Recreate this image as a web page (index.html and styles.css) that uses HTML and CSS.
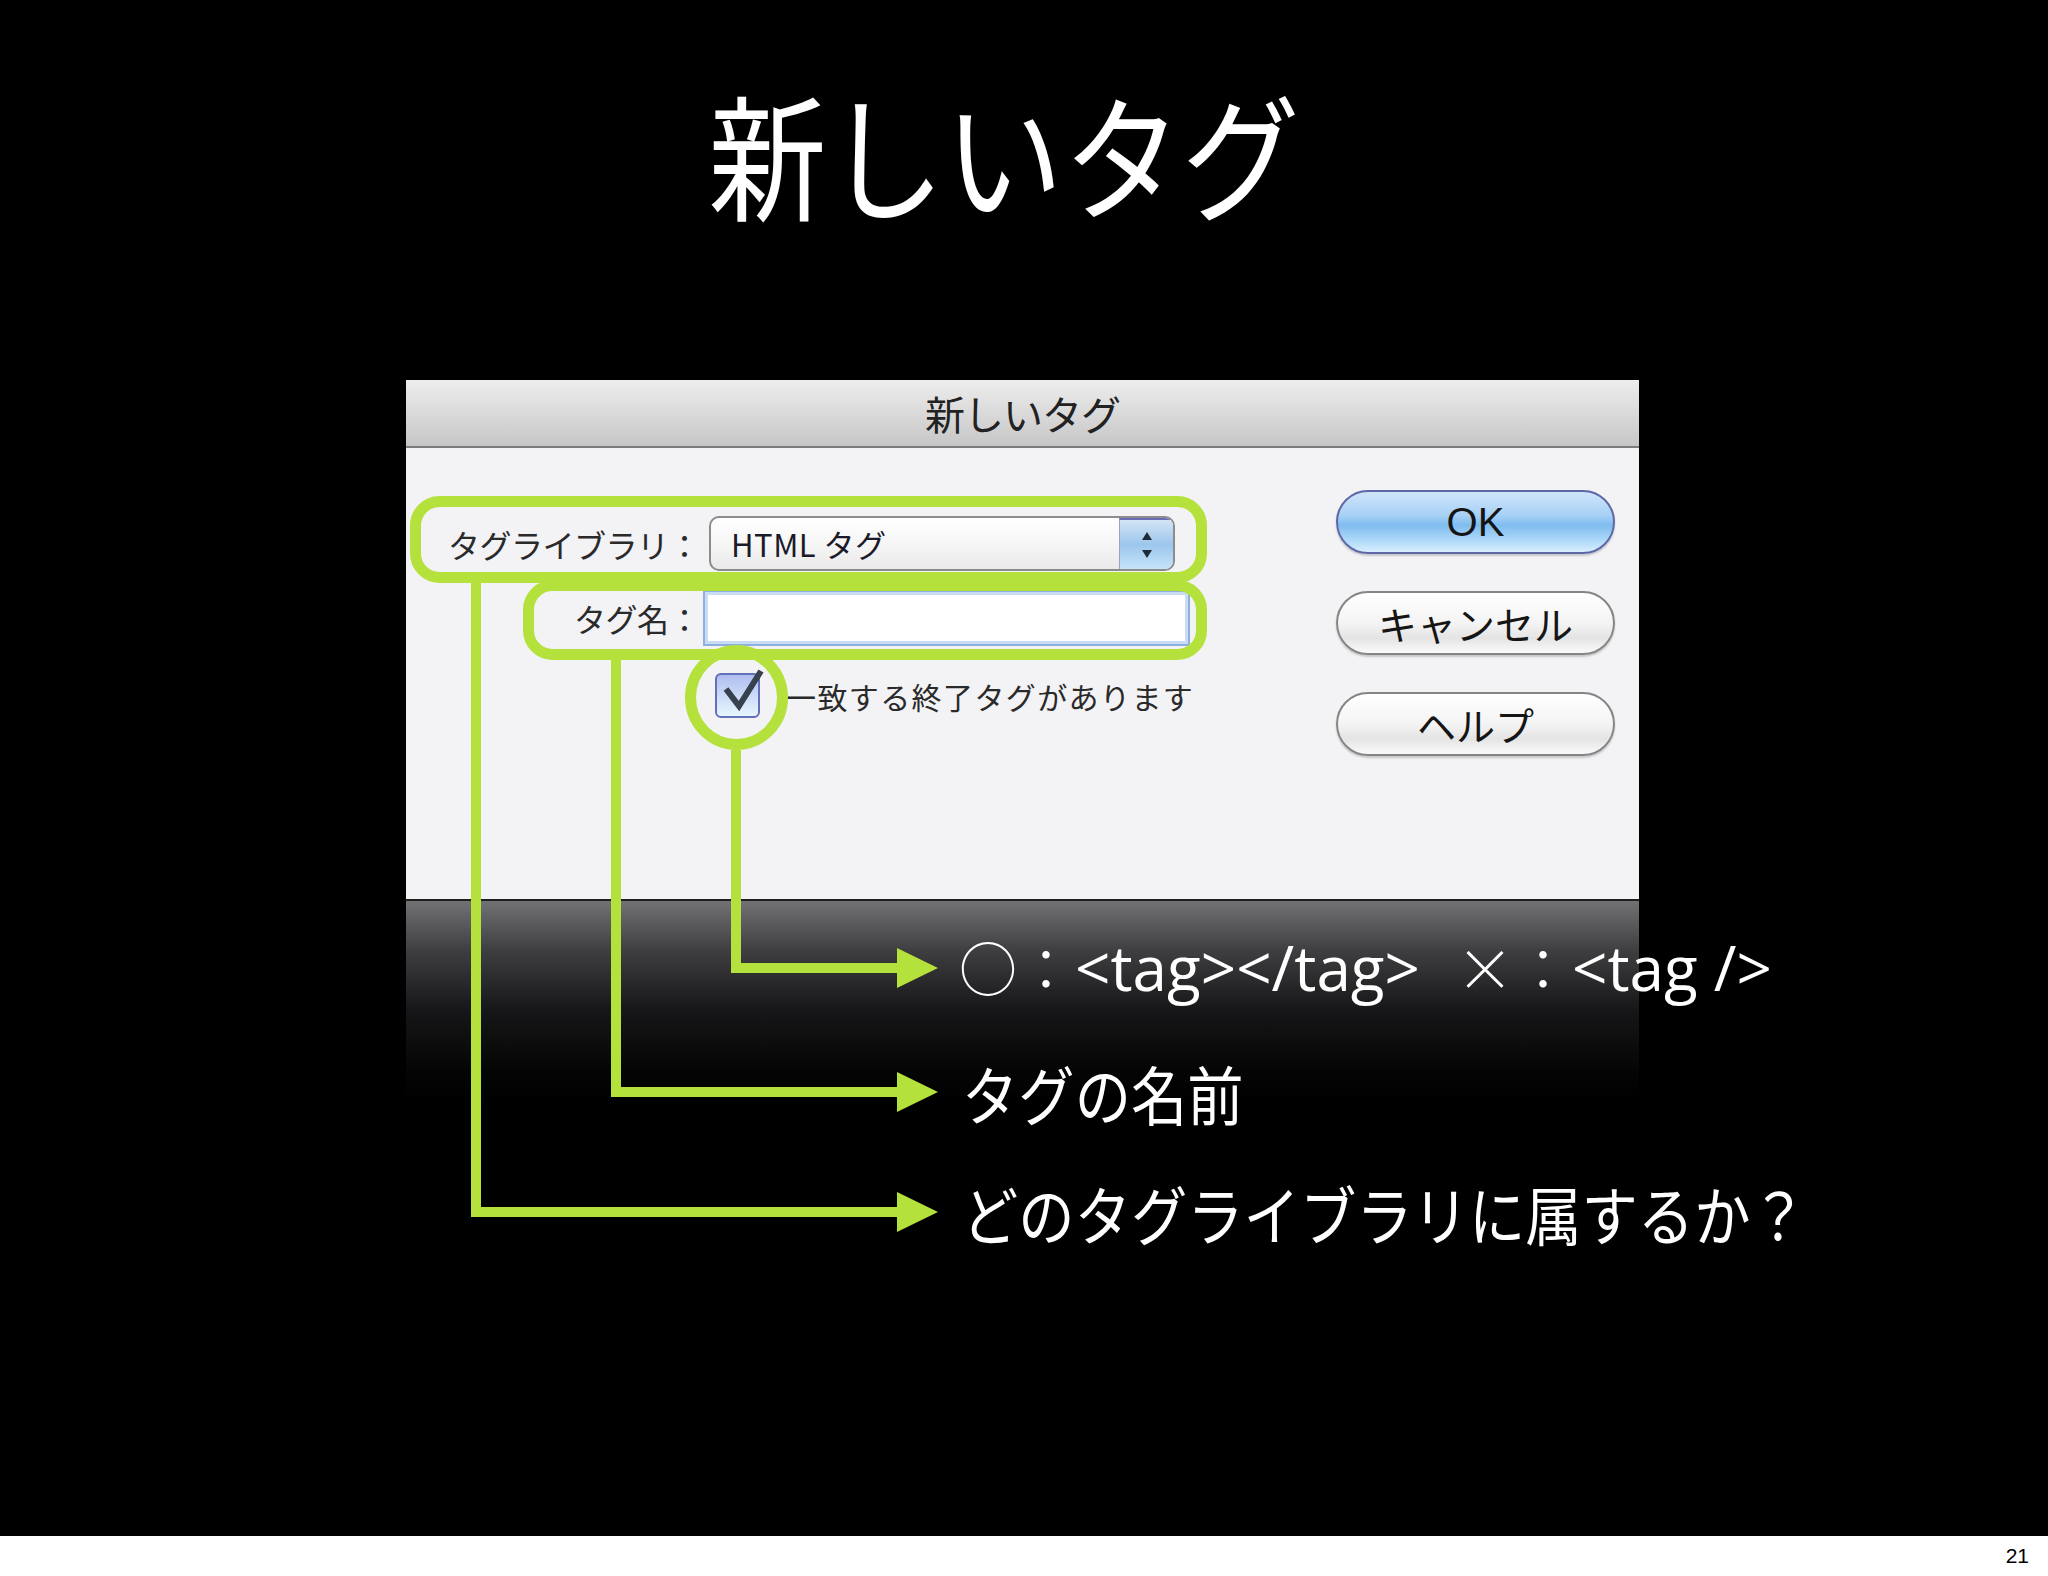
FILE: index.html
```html
<!DOCTYPE html>
<html lang="ja">
<head>
<meta charset="utf-8">
<title>新しいタグ</title>
<link rel="stylesheet" href="styles.css">
</head>
<body>
<div class="slide">
  <h1 class="title"><span class="title-text">新しいタグ</span></h1>

  <div class="stage">
    <div class="dialog">
      <div class="titlebar">新しいタグ</div>
      <div class="dbody">
        <div class="form">
          <div class="row row-lib">
            <span class="lbl">タグライブラリ：</span>
            <div class="select">
              <span class="sel-text">HTML タグ</span>
              <span class="stepper">
                <svg width="20" height="34" viewBox="0 0 20 34"><path d="M10 4 L15 12 H5 Z" fill="#1f2a3a"/><path d="M10 30 L15 22 H5 Z" fill="#1f2a3a"/></svg>
              </span>
            </div>
          </div>
          <div class="row row-name">
            <span class="lbl">タグ名：</span>
            <div class="field"></div>
          </div>
          <div class="row row-check">
            <span class="check">
              <svg class="tick" width="60" height="60" viewBox="0 0 60 60"><path d="M11 21 L24 38 L46 3" fill="none" stroke="#38424f" stroke-width="6" stroke-linejoin="miter"/></svg>
            </span>
            <span class="check-lbl">一致する終了タグがあります</span>
          </div>
        </div>
        <div class="buttons">
          <div class="btn btn-ok">OK</div>
          <div class="btn">キャンセル</div>
          <div class="btn">ヘルプ</div>
        </div>
      </div>
    </div>
    <div class="reflection"></div>
  </div>

  <svg class="annot" width="2048" height="1536" viewBox="0 0 2048 1536">
    <g fill="none" stroke="#b4e13b" stroke-width="11">
      <rect x="415.5" y="501.5" width="786" height="76" rx="24"/>
      <rect x="528.5" y="585.5" width="673" height="69" rx="24"/>
      <ellipse cx="736.5" cy="697.5" rx="46" ry="47"/>
    </g>
    <g fill="none" stroke="#b4e13b" stroke-width="10" stroke-linejoin="miter">
      <path d="M476 583 V1212 H900"/>
      <path d="M616 660 V1092 H900"/>
      <path d="M736 750 V968 H900"/>
    </g>
    <g fill="#b4e13b">
      <polygon points="897,948 938,968 897,988"/>
      <polygon points="897,1072 938,1092 897,1112"/>
      <polygon points="897,1192 938,1212 897,1232"/>
    </g>
  </svg>

  <div class="callout c1"><span class="jp">○：</span><span class="lat">&lt;tag&gt;&lt;/tag&gt;</span><span class="jp cross">×：</span><span class="lat">&lt;tag /&gt;</span></div>
  <div class="callout c2"><span class="cond">タグの名前</span></div>
  <div class="callout c3"><span class="cond">どのタグライブラリに属するか？</span></div>
</div>
<footer class="footer"><span class="pageno">21</span></footer>
</body>
</html>
```

FILE: styles.css
```css
html, body {
  margin: 0;
  padding: 0;
}
body {
  width: 2048px;
  height: 1576px;
  overflow: hidden;
  background: #000;
  font-family: "Noto Sans CJK JP", "Noto Sans", sans-serif;
}
.slide {
  position: relative;
  height: 1536px;
  background: #000;
}
.title {
  margin: 0;
  padding: 84px 40px 0 0;
  height: 136px;
  line-height: 136px;
  font-size: 136px;
  font-weight: 400;
  color: #fff;
  text-align: center;
}
.title-text {
  display: inline-block;
  transform: scaleX(0.87);
}
.stage {
  margin: 160px 0 0 406px;
  width: 1233px;
}
.dialog {
  height: 521px;
  background: #f3f3f5;
  border-bottom: 2px solid #1e1e1e;
  box-sizing: border-box;
  display: flex;
  flex-direction: column;
}
.titlebar {
  height: 68px;
  box-sizing: border-box;
  border-bottom: 2px solid #7c7c7c;
  background: linear-gradient(#ededed, #dcdcdc 45%, #c6c6c6);
  color: #222;
  font-size: 40px;
  line-height: 66px;
  text-align: center;
  letter-spacing: -1px;
}
.dbody {
  flex: 1;
  display: flex;
  justify-content: space-between;
}
.form {
  padding-top: 68px;
  display: flex;
  flex-direction: column;
}
.row {
  display: flex;
  align-items: center;
}
.lbl {
  width: 294px;
  text-align: right;
  font-size: 32px;
  color: #2a2a2a;
  letter-spacing: -0.5px;
}
.row-lib { height: 55px; }
.select {
  margin-left: 9px;
  width: 466px;
  height: 55px;
  box-sizing: border-box;
  border: 2px solid #8c8c8c;
  border-radius: 10px;
  background: linear-gradient(#ffffff, #f6f6f6 50%, #e9e9e9);
  display: flex;
  align-items: center;
  justify-content: space-between;
  overflow: hidden;
}
.sel-text {
  padding-left: 20px;
  font-size: 31px;
  color: #1a1a2a;
  letter-spacing: 0.5px;
}
.stepper {
  width: 54px;
  height: 100%;
  box-sizing: border-box;
  border-left: 1px solid #9aa6b8;
  background: linear-gradient(#d4e4f6, #9cc6ec 50%, #c6e4fa);
  display: flex;
  align-items: center;
  justify-content: center;
  border-top: 2px solid #6b6cb8;
}
.row-name {
  margin-top: 19px;
  height: 56px;
}
.field {
  margin-left: 3px;
  width: 487px;
  height: 56px;
  box-sizing: border-box;
  background: #fff;
  border: 2px solid #8eb0e0;
  box-shadow: inset 0 0 0 3px #c9dcf4;
}
.row-check {
  margin-top: 27px;
  height: 45px;
}
.check {
  margin-left: 309px;
  width: 45px;
  height: 45px;
  flex: none;
  box-sizing: border-box;
  border: 2px solid #6470b8;
  border-radius: 6px;
  background: linear-gradient(#aebdf0, #c9d8f6 45%, #e8f6ff);
  position: relative;
}
.tick {
  position: absolute;
  left: -2px;
  top: -7px;
  overflow: visible;
}
.check-lbl {
  margin-left: 26px;
  font-size: 30px;
  color: #2a2a2a;
  letter-spacing: 1.4px;
}
.buttons {
  padding: 42px 24px 0 0;
  display: flex;
  flex-direction: column;
  gap: 37px;
}
.btn {
  width: 279px;
  height: 64px;
  box-sizing: border-box;
  border: 2px solid #858585;
  border-radius: 32px;
  background: linear-gradient(#ffffff, #f4f4f4 50%, #e4e4e4 75%, #fafafa);
  box-shadow: 0 2px 2px rgba(0,0,0,0.18);
  display: flex;
  align-items: center;
  justify-content: center;
  font-family: "Liberation Sans", "Noto Sans CJK JP", sans-serif;
  font-size: 39px;
  color: #151515;
}
.btn-ok {
  border-color: #5e67a8;
  background: linear-gradient(#cfe6fb, #a6d0f5 40%, #7fbcef 55%, #b7defa 85%, #d8effd);
  font-size: 40px;
}
.reflection {
  height: 200px;
  background: linear-gradient(#727274, #3e3e40 25%, #161618 55%, #050505 85%, #000);
}
.annot {
  position: absolute;
  left: 0;
  top: 0;
}
.callout {
  position: absolute;
  left: 959px;
  height: 70px;
  line-height: 70px;
  color: #fff;
  white-space: nowrap;
}
.c1 { top: 931px; font-size: 58px; }
.c2 { top: 1057px; left: 962px; font-size: 64px; }
.c3 { top: 1177px; left: 962px; font-size: 64px; }
.jp {
  font-family: "Noto Sans CJK JP", sans-serif;
  font-weight: 300;
}
.cross {
  margin-left: 36px;
}
.lat {
  font-family: "Open Sans", "Noto Sans", sans-serif;
  font-size: 62px;
}
.cond {
  display: inline-block;
  transform: scaleX(0.88);
  transform-origin: left center;
}
.footer {
  height: 40px;
  background: #fff;
  text-align: right;
  padding-right: 19px;
  font-family: "Liberation Sans", Arial, sans-serif;
  font-size: 21px;
  line-height: 40px;
  color: #000;
}
```
